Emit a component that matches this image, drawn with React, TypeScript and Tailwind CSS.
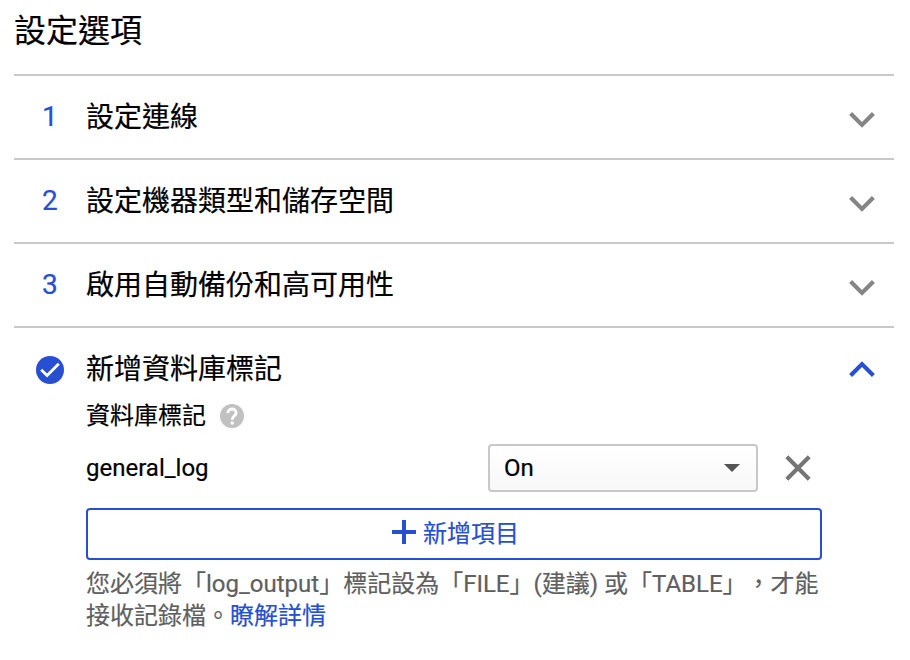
const Chevron = ({ up = false }: { up?: boolean }) => (
  <svg width="26" height="16" viewBox="0 0 26 16" className={up ? "rotate-180 text-[#264fd1]" : "text-[#858585]"}>
    <path d="M1.6 1.5 13 12.9 24.4 1.5" fill="none" stroke="currentColor" strokeWidth="4.2" />
  </svg>
);

const Row = ({ n, label }: { n: string; label: string }) => (
  <div className="flex h-[84px] items-center border-t-2 border-[#c9c9c9] pr-[19px]">
    <span className="w-[72px] pl-[28px] text-[28px] leading-10 text-[#264fd1]">{n}</span>
    <span className="flex-1 pt-[2px] text-[28px] leading-10">{label}</span>
    <div className="pt-[5px]"><Chevron /></div>
  </div>
);

export default function App() {
  return (
    <main className="h-[660px] w-[910px] overflow-hidden bg-white pl-[14px] pr-4 font-[Roboto,'Noto_Sans_CJK_TC',sans-serif] text-black [-webkit-text-stroke:0.2px_currentColor] [text-spacing-trim:space-all]">
      <h1 className="h-[74px] pt-[8px] text-[32px] font-normal leading-[46px]">設定選項</h1>
      <Row n="1" label="設定連線" />
      <Row n="2" label="設定機器類型和儲存空間" />
      <Row n="3" label="啟用自動備份和高可用性" />
      <section className="flex border-t-2 border-[#c9c9c9]">
        <div className="w-[72px] pl-[22px] pt-[28px]">
          <svg width="28" height="28" viewBox="0 0 28 28">
            <circle cx="14" cy="14" r="14" fill="#264fd1" />
            <path d="m5.2 13.8 5.9 5.8L22.8 7.8" fill="none" stroke="white" strokeWidth="2.8" />
          </svg>
        </div>
        <div className="w-[736px]">
          <h2 className="h-[60px] pt-[22px] text-[28px] font-normal leading-10">新增資料庫標記</h2>
          <div className="flex h-[56px] items-center gap-[14px] text-[24px]">
            資料庫標記
            <svg width="24" height="24" viewBox="0 0 24 24">
              <circle cx="12" cy="12" r="12" fill="#c1c1c1" />
              <path d="M7.9 9.1A4.1 4 0 0 1 16.1 8.9C16.1 11.8 12.2 12.1 12.2 15.7" fill="none" stroke="white" strokeWidth="2.8" />
              <circle cx="12.2" cy="19" r="1.7" fill="white" />
            </svg>
          </div>
          <div className="flex h-[48px] items-center text-[24px]">
            <span className="w-[402px]">general_log</span>
            <div className="flex h-[48px] w-[270px] items-center justify-between rounded-[4px] border-2 border-[#c8c8c8] bg-linear-to-b from-white to-[#f8f8f8] pl-[14px] pr-4">
              On
              <svg width="16" height="8" viewBox="0 0 16 8"><path d="M0 0h16L8 8Z" fill="#555" /></svg>
            </div>
            <svg width="26" height="26" viewBox="0 0 26 26" className="ml-[27px]"><path d="m1.8 1.8 22.4 22.4M24.2 1.8 1.8 24.2" stroke="#757575" strokeWidth="4.1" /></svg>
          </div>
          <button className="mt-4 flex h-[52px] w-[736px] items-center justify-center gap-[7px] rounded-[4px] border-2 border-[#264fd1] pl-[3px] text-[24px] text-[#264fd1]">
            <svg width="24" height="24" viewBox="0 0 24 24" className="mb-1"><path d="M12 0v24M0 12h24" stroke="currentColor" strokeWidth="4" /></svg>
            新增項目
          </button>
          <p className="mt-[8px] whitespace-nowrap text-[24px] leading-[32px] text-[#5f5f5f]">
            您必須將「log_output」標記設為「FILE」(建議) 或「TABLE」，才能<br />接收記錄檔。<span className="text-[#264fd1]">瞭解詳情</span>
          </p>
        </div>
        <div className="ml-[27px] pt-[33px]"><Chevron up /></div>
      </section>
    </main>
  );
}
